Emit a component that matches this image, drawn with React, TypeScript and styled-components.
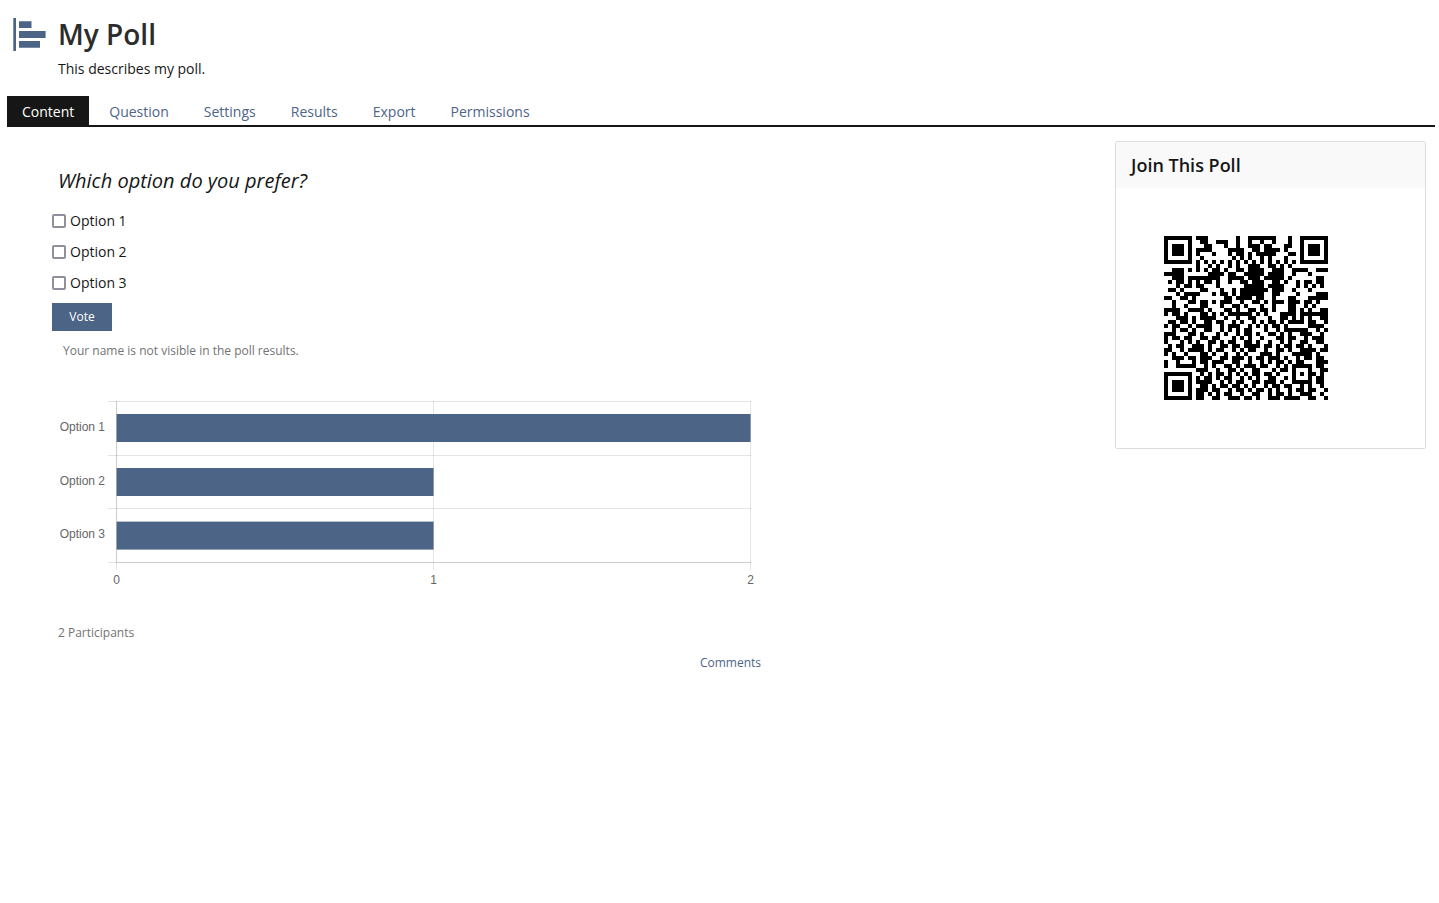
import React from 'react';
import styled, { createGlobalStyle } from 'styled-components';

const blue = '#4c6586';
const ink = '#161616';

const GlobalStyle = createGlobalStyle`
  * { box-sizing: border-box; }
  body {
    margin: 0;
    background: #fff;
    color: ${ink};
    font-family: "Open Sans", "Noto Sans", sans-serif;
    font-size: 14px;
    line-height: 20px;
  }
`;

const Page = styled.div`
  padding: 14px 4px 20px 7px;
`;

const Header = styled.header`
  display: flex;
  gap: 8px;
  padding-left: 4px;
`;

const PollIcon = styled.svg`
  flex: none;
  width: 39px;
  height: 40px;
`;

const Title = styled.h1`
  margin: 0;
  color: #2c2c2c;
  font-size: 28px;
  font-weight: 600;
  line-height: 40px;
`;

const Description = styled.p`
  margin: 5px 0 0;
`;

const Tabs = styled.nav`
  display: flex;
  gap: 5px;
  margin-top: 17px;
  border-bottom: 2px solid ${ink};
`;

const Tab = styled.a<{ $active?: boolean }>`
  padding: 6px 15px 3px;
  background: ${(p) => (p.$active ? ink : 'transparent')};
  color: ${(p) => (p.$active ? '#fff' : blue)};
  text-decoration: none;
`;

const Columns = styled.div`
  display: flex;
  align-items: flex-start;
  gap: 15px;
  padding: 14px 9px 0 45px;
`;

const Main = styled.main`
  flex: 1;
  min-width: 0;
`;

const PollBody = styled.div`
  max-width: 709px;
`;

const Question = styled.h2`
  margin: 24px 6px 0;
  font-size: 20px;
  font-style: italic;
  font-weight: 400;
  line-height: 32px;
`;

const Options = styled.div`
  display: flex;
  flex-direction: column;
  gap: 11px;
  margin-top: 14px;
`;

const Option = styled.label`
  display: flex;
  align-items: center;
  gap: 4px;
`;

const Checkbox = styled.input`
  appearance: none;
  width: 14px;
  height: 14px;
  margin: 0;
  border: 2px solid #8f8f9d;
  border-radius: 2px;
  background: #fff;
  &:checked { background: ${blue}; }
`;

const VoteButton = styled.button`
  display: block;
  width: 60px;
  height: 28px;
  margin: 10px 0;
  padding: 0;
  border: 0;
  background: ${blue};
  color: #fff;
  font: 12px/28px "Open Sans", "Noto Sans", sans-serif;
  cursor: pointer;
`;

const Note = styled.p<{ $inset: number }>`
  margin: 0;
  padding-left: ${(p) => p.$inset}px;
  color: #737373;
  font-size: 12px;
  line-height: 20px;
`;

const Chart = styled.svg`
  display: block;
  width: 100%;
  height: auto;
  margin: 30px 0 31px;
  font: 12px "Liberation Sans", Arial, sans-serif;
  fill: #666;
`;

const Comments = styled.a`
  display: block;
  width: fit-content;
  margin: 10px 0 0 auto;
  color: ${blue};
  font-size: 12px;
  text-decoration: none;
`;

const Panel = styled.aside`
  width: 311px;
  border: 1px solid #ddd;
  border-radius: 2px;
`;

const PanelTitle = styled.h2`
  margin: 0;
  padding: 11px 15px;
  background: #f9f9f9;
  font-size: 18px;
  font-weight: 600;
  line-height: 24px;
`;

const QrCode = styled.svg`
  display: block;
  width: 164px;
  height: 164px;
  margin: 48px;
`;

const tabs = ['Content', 'Question', 'Settings', 'Results', 'Export', 'Permissions'];

const results = [
  { label: 'Option 1', votes: 2, y: 23 },
  { label: 'Option 2', votes: 1, y: 77 },
  { label: 'Option 3', votes: 1, y: 130.6 },
];

const qrRows = [
  '#######.###.......#..#######...#..#######',
  '#.....#..##..###..#..#..#..#...#..#.....#',
  '#.###.#...##...#..#..###.##...##..#.###.#',
  '#.###.#.####....####..##.####.#...#.###.#',
  '#.###.#.#...#...#.##.#.#####...##.#.###.#',
  '#.....#..#.......#.#.#..#.#...#...#.....#',
  '#######.#.#.#.#.#.#.#.#.#.#.#.#.#.#######',
  '........#..#.#..#.#..###..##.#.#.........',
  '..###.#.#.#.##.#..##.####..###..####..###',
  '#####......####.##..#####.####..#...#....',
  '..###.########..####.###.#####.#......##.',
  '.#.##.#.#.##.#..#..##.###..##.#..#.##.##.',
  '...#.##.##...#......#####.####...#.#.#.#.',
  '.##.#....##...#..#.#######.###..#...#....',
  '...#.####...#.##.#.######..##....#....###',
  '##..##.#.......##.####.##..#...##...#####',
  '..#...##.##.#.###..#..##.#.###.###.##.#..',
  '..#..#...##...#..##.#...#..#...##..#.#...',
  '####..####.#...##.#..##.##.#...##.#.#..##',
  '#.##.#...##.#.#.######.#.#...####.#######',
  '...###.#.####..#..#..##...#..##.#.#.#..##',
  '.##.##.#..##.##..#.#..#.#.##.#.####.##..#',
  '#.##..#.####..#.###..#.#.#.##.#.....####.',
  '..#.##.#..##..#.#.#.##...#..#.######..#.#',
  '###...##.#...#.#..#.##.#..##.#.#..###..#.',
  '#.##.##..##.##...#.#.#..#...##.##..#.###.',
  '#...#.#.#..##.#.##..##.#..#..#.#..##..##.',
  '.#.##..###.#..##.##.####.##.#.##.##.#...#',
  '##..#.####.#.##..#.#.##..#..##.#..####.##',
  '#.#..#...##.#..#..#.#...###.#...#####.#..',
  '..###.##.###..##.###.#.##.###.#..#.##.##.',
  '#..#...#.##.###..##..#..#.#.##.#.##...###',
  '#..#####..#.#..##.#.###.##..#.#.#####.##.',
  '........###..#..##.#..##...#.##.#...#..##',
  '#######..#.#.##.#.#.#.##.##.#...#.#.##.#.',
  '#.....#.#.##.#.##..#.#.#..##..#.#...#.##.',
  '#.###.#.####..#.#.##..##.###.#..#####.##.',
  '#.###.#..##.#.##.##.#.#..#.##.##..#.#..#.',
  '#.###.#.###.##..#.##.#.##.#.#..#.##.##..#',
  '#.....#.##.#.#.##..#..##..#.##.#..###..#.',
  '#######.##..##..###.##.#..###.####..##..#',
];

export default function App() {
  return (
    <>
      <GlobalStyle />
      <Page>
        <Header>
          <PollIcon viewBox="0 0 39 40" fill={blue} aria-hidden="true">
            <path d="M2.3 4H5v33H2.3zM8 7.3h12.5V14H8zM8 17h26.6v7H8zM8 27h21v6.7H8z" />
          </PollIcon>
          <div>
            <Title>My Poll</Title>
            <Description>This describes my poll.</Description>
          </div>
        </Header>
        <Tabs>
          {tabs.map((tab, i) => (
            <Tab key={tab} href="#" $active={i === 0}>{tab}</Tab>
          ))}
        </Tabs>
        <Columns>
          <Main>
            <PollBody>
              <Question>Which option do you prefer?</Question>
              <Options>
                {results.map((r) => (
                  <Option key={r.label}>
                    <Checkbox type="checkbox" />
                    {r.label}
                  </Option>
                ))}
              </Options>
              <VoteButton type="button">Vote</VoteButton>
              <Note $inset={11}>Your name is not visible in the poll results.</Note>
              <Chart viewBox="0 0 709 201" role="img" aria-label="Poll results">
                <g fill="#000" fillOpacity="0.1" shapeRendering="crispEdges">
                  {[10, 64, 117, 171].map((y) => (
                    <rect key={y} x="56" y={y} width="643" height="1" />
                  ))}
                  {[64, 381, 698].map((x) => (
                    <rect key={x} x={x} y="10" width="1" height="169" />
                  ))}
                  <rect x="64" y="10" width="1" height="161" />
                  <rect x="64" y="171" width="635" height="1" />
                </g>
                {results.map((r) => (
                  <g key={r.label}>
                    <rect x="64.6" y={r.y} width={r.votes * 317} height="28" fill={blue} />
                    <text x="53" y={Math.floor(r.y) + 17} textAnchor="end">{r.label}</text>
                  </g>
                ))}
                {[0, 1, 2].map((n) => (
                  <text key={n} x={64.5 + n * 317} y="193" textAnchor="middle">{n}</text>
                ))}
              </Chart>
              <Note $inset={6}>2 Participants</Note>
              <Comments href="#">Comments</Comments>
            </PollBody>
          </Main>
          <Panel>
            <PanelTitle>Join This Poll</PanelTitle>
            <QrCode viewBox="0 0 41 41" role="img" aria-label="QR code" shapeRendering="crispEdges">
              <path
                d={qrRows
                  .map((row, y) =>
                    Array.from(row, (cell, x) => (cell === '#' ? `M${x} ${y}h1v1h-1z` : '')).join('')
                  )
                  .join('')}
              />
            </QrCode>
          </Panel>
        </Columns>
      </Page>
    </>
  );
}
